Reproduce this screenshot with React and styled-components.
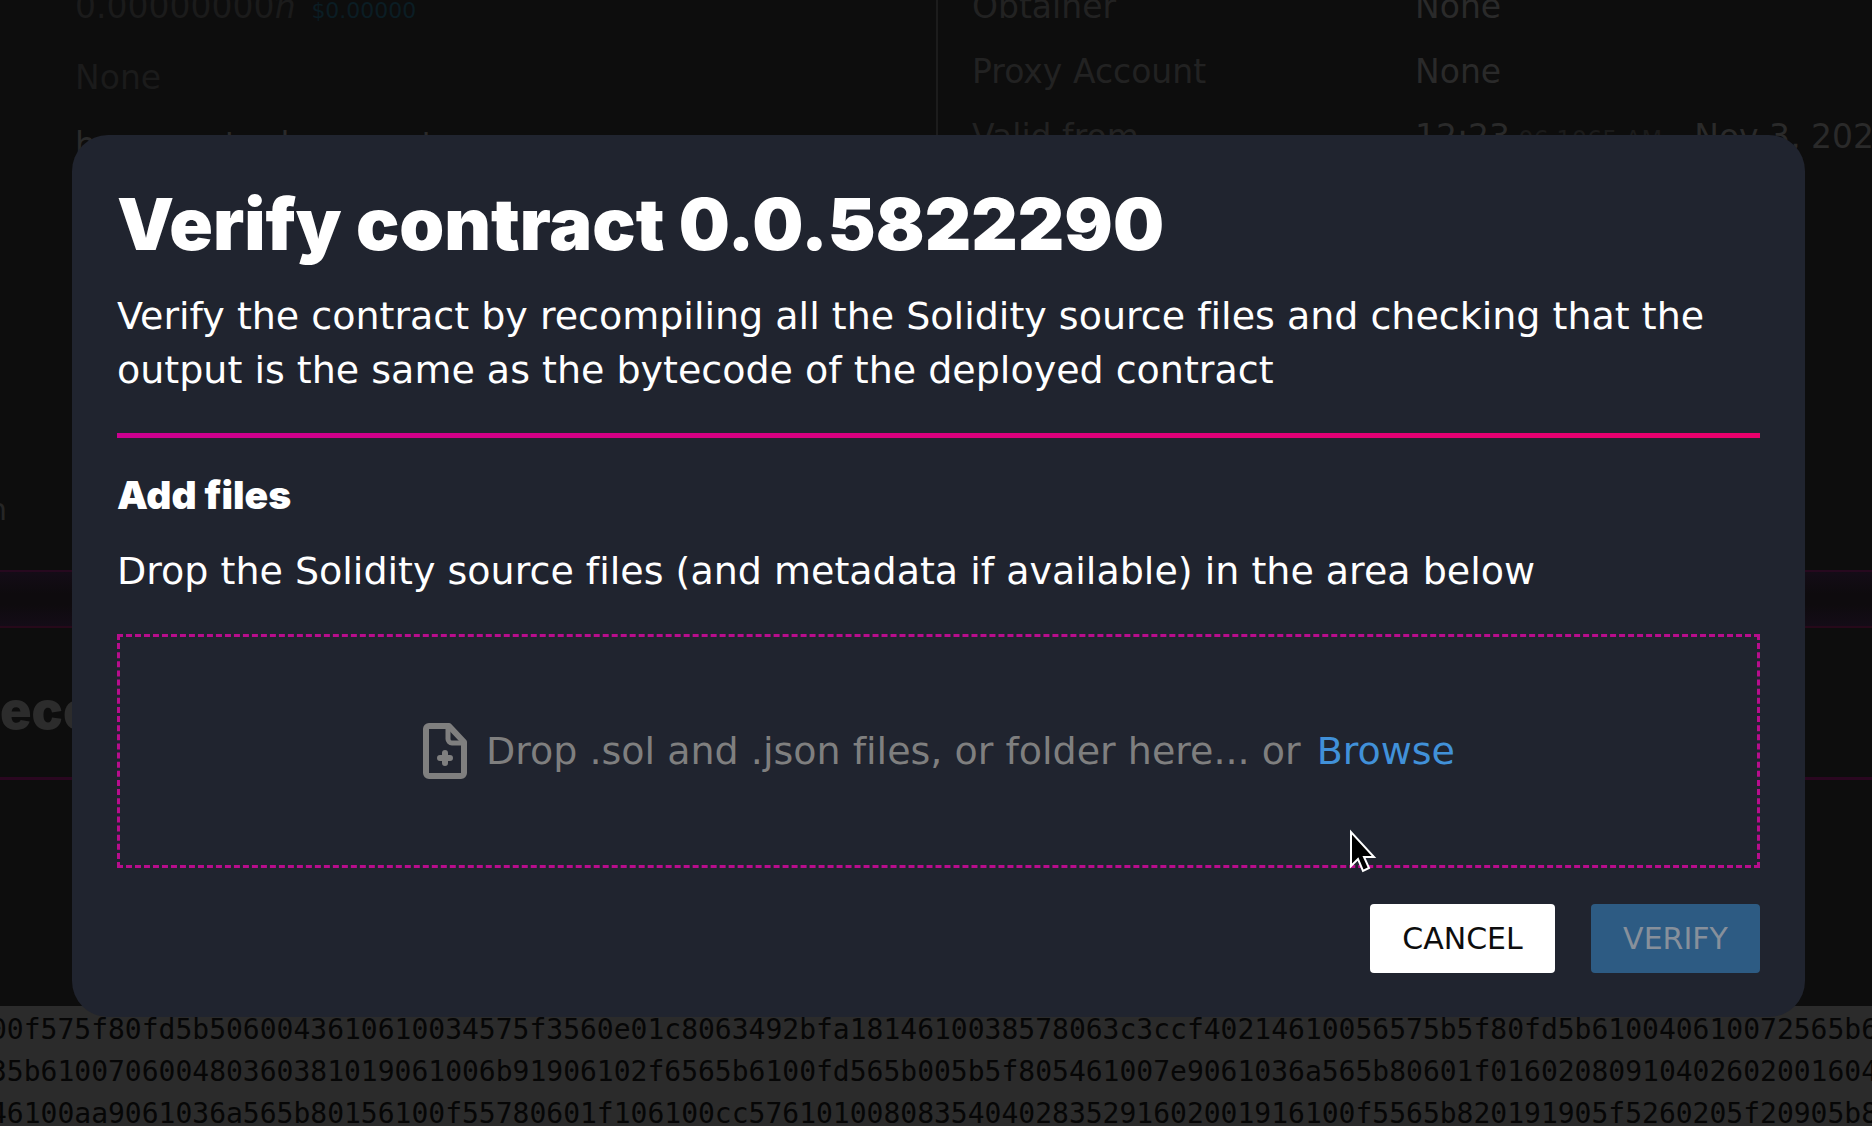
import React from 'react';
import styled, { createGlobalStyle } from 'styled-components';

const GlobalStyle = createGlobalStyle`
  *, *::before, *::after { box-sizing: border-box; }
  body {
    margin: 0;
    background: #0d0d0d;
    color: #ffffff;
    font-family: "DejaVu Sans", Verdana, sans-serif;
    font-size: 38px;
    font-variant-ligatures: none;
    line-height: 54px;
  }
  h1, h2, p { margin: 0; }
  h1, h2 { font-family: Inter, "Liberation Sans", sans-serif; font-weight: 900; }
`;

const Page = styled.div`
  position: relative;
  height: 100vh;
  overflow: hidden;
`;

const Backdrop = styled.main`
  display: flex;
  flex-direction: column;
  height: 100%;

  > * { flex-shrink: 0; }
`;

const Details = styled.section`
  display: grid;
  grid-template-columns: repeat(2, minmax(0, 1fr));
  height: 495px;
  font-size: 33px;
  line-height: 65px;
  white-space: nowrap;
`;

const DetailColumn = styled.div`
  display: flex;
  flex-direction: column;
  margin-top: -26px;
`;

const LeftColumn = styled(DetailColumn)`
  padding-left: 75px;
  gap: 2px;
  color: #1b1b1b;
`;

const RightColumn = styled(DetailColumn)`
  padding-left: 34px;
  border-left: 2px solid #1c1c1c;
`;

const Amount = styled.div`
  display: flex;
  align-items: baseline;
  gap: 16px;
`;

const Usd = styled.span`
  color: #0b1d24;
  font-size: 22px;
`;

const Memo = styled.div`
  color: #2a2a2a;
`;

const DetailRow = styled.div`
  display: grid;
  grid-template-columns: 443px 1fr;
  color: #222222;
`;

const Value = styled.span`
  color: #2a2a2a;
`;

const Moment = styled(Value)`
  display: flex;
  align-items: baseline;
`;

const Seconds = styled.small`
  margin-right: 32px;
  color: #1b1b1b;
  font-size: 24px;
`;

const Hint = styled.p`
  height: 75px;
  margin-left: -12px;
  color: #262626;
  font-size: 30px;
  line-height: 30px;
`;

const Band = styled.div`
  height: 58px;
  border-top: 2px solid #27091f;
  border-bottom: 2px solid #27091a;
  background: linear-gradient(#140c17, #0e0b0e 40%, #0e0b0e 60%, #140c17);
`;

const BytecodeTitle = styled.h2`
  height: 152px;
  padding-top: 49px;
  border-bottom: 3px solid #2a0720;
  color: #2c2c2c;
  font-size: 52px;
  line-height: 68px;
`;

const Bytecode = styled.pre`
  margin: 226px 0 0;
  padding-top: 3px;
  background: #2b2b2b;
  color: #060606;
  font-family: "DejaVu Sans Mono", monospace;
  font-size: 28px;
  line-height: 42px;
`;

const CodeLine = styled.span`
  display: block;
  margin-left: -10px;
`;

const Overlay = styled.div`
  position: absolute;
  inset: 0;
  padding: 135px 67px 0 72px;
`;

const Dialog = styled.section`
  padding: 52px 45px 44px;
  border-radius: 36px;
  background: #20242f;
`;

const Title = styled.h1`
  font-size: 72px;
  line-height: 74px;
`;

const Intro = styled.p`
  margin-top: 28px;
`;

const Divider = styled.hr`
  height: 5px;
  margin: 36px 0 30px;
  border: 0;
  background: linear-gradient(90deg, #cc0090, #da007e 50%, #ea006c);
`;

const SubTitle = styled.h2`
  font-size: 39px;
  line-height: 54px;
`;

const Instruction = styled.p`
  margin-top: 22px;
`;

const DropArea = styled.div`
  display: flex;
  align-items: center;
  justify-content: center;
  height: 234px;
  margin-top: 36px;
  border: 3px dashed #b80d8c;
  color: #7f7f7f;
`;

const FileIcon = styled.svg`
  width: 46px;
  height: 58px;
  margin-right: 18px;
`;

const Browse = styled.a`
  margin-left: 16px;
  color: #4191d9;
  text-decoration: none;
`;

const Actions = styled.div`
  display: flex;
  justify-content: flex-end;
  gap: 36px;
  margin-top: 36px;
`;

const Button = styled.button`
  min-width: ${(p) => (p.$primary ? '169px' : '185px')};
  height: 69px;
  padding: 0;
  border: 0;
  border-radius: 4px;
  background: ${(p) => (p.$primary ? '#2d5b83' : '#ffffff')};
  color: ${(p) => (p.$primary ? '#87909b' : '#0d0d0d')};
  font: inherit;
  font-size: 30px;
  line-height: 32px;
`;

const Pointer = styled.svg`
  position: absolute;
  left: 1348px;
  top: 828px;
  width: 30px;
  height: 46px;
`;

const details = [
  { label: 'Obtainer', value: 'None' },
  { label: 'Proxy Account', value: 'None' },
];

const code = [
  '00f575f80fd5b5060043610610034575f3560e01c8063492bfa1814610038578063c3ccf40214610056575b5f80fd5b610040610072565b6',
  '35b610070600480360381019061006b91906102f6565b6100fd565b005b5f805461007e9061036a565b80601f0160208091040260200160405',
  '46100aa9061036a565b80156100f55780601f106100cc576101008083540402835291602001916100f5565b820191905f5260205f20905b8',
];

export default function App() {
  return (
    <Page>
      <GlobalStyle />
      <Backdrop>
        <Details>
          <LeftColumn>
            <Amount>
              <span>0.00000000<i>ℏ</i></span>
              <Usd>$0.00000</Usd>
            </Amount>
            <div>None</div>
            <Memo>hcs smart edge count</Memo>
          </LeftColumn>
          <RightColumn>
            {details.map((d) => (
              <DetailRow key={d.label}>
                <span>{d.label}</span>
                <Value>{d.value}</Value>
              </DetailRow>
            ))}
            <DetailRow>
              <span>Valid from</span>
              <Moment>
                12:23<Seconds>:06.1065 AM</Seconds>Nov 3, 2024
              </Moment>
            </DetailRow>
          </RightColumn>
        </Details>
        <Hint>n</Hint>
        <Band />
        <BytecodeTitle>ecode</BytecodeTitle>
        <Bytecode>
          {code.map((line) => (
            <CodeLine key={line}>{line}</CodeLine>
          ))}
        </Bytecode>
      </Backdrop>

      <Overlay>
        <Dialog role="dialog" aria-labelledby="verify-title">
          <Title id="verify-title">Verify contract 0.0.5822290</Title>
          <Intro>
            Verify the contract by recompiling all the Solidity source files and checking that the
            output is the same as the bytecode of the deployed contract
          </Intro>
          <Divider />
          <SubTitle>Add files</SubTitle>
          <Instruction>
            Drop the Solidity source files (and metadata if available) in the area below
          </Instruction>
          <DropArea>
            <FileIcon viewBox="0 0 46 58" fill="none" stroke="currentColor" strokeWidth="6" strokeLinejoin="round" strokeLinecap="round" aria-hidden="true">
              <path d="M7 4H27L42 20V51a3 3 0 0 1-3 3H7a3 3 0 0 1-3-3V7a3 3 0 0 1 3-3Z" />
              <path d="M26 5V17a4 4 0 0 0 4 4H41" strokeWidth="5" />
              <path d="M23 31V41M18 36H28" strokeWidth="6" />
            </FileIcon>
            <span>Drop .sol and .json files, or folder here... or</span>
            <Browse href="#browse">Browse</Browse>
          </DropArea>
          <Actions>
            <Button type="button">CANCEL</Button>
            <Button type="button" $primary disabled>VERIFY</Button>
          </Actions>
        </Dialog>
      </Overlay>

      <Pointer viewBox="0 0 30 46" aria-hidden="true">
        <path d="M3 4V38L10 31L15 43L21 40L16 29H26Z" fill="#000" stroke="#fff" strokeWidth="2" />
      </Pointer>
    </Page>
  );
}
